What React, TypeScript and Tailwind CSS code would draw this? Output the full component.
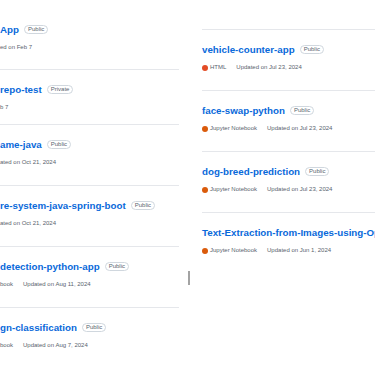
type Repo = {
  name: string
  badge: "Public" | "Private"
  language?: { name: string; color: string }
  updated: string
}

type Row = Repo & { pad: string }

const leftRows: Row[] = [
  { name: "App", badge: "Public", updated: "ed on Feb 7", pad: "pt-[22px] pb-[17px]" },
  { name: "repo-test", badge: "Private", updated: "b 7", pad: "pt-[12px] pb-[12px]" },
  { name: "ame-java", badge: "Public", updated: "ated on Oct 21, 2024", pad: "pt-[12px] pb-[18px]" },
  { name: "re-system-java-spring-boot", badge: "Public", updated: "ated on Oct 21, 2024", pad: "pt-[12px] pb-[18px]" },
  {
    name: "detection-python-app",
    badge: "Public",
    language: { name: "book", color: "" },
    updated: "Updated on Aug 11, 2024",
    pad: "pt-[12px] pb-[18px]",
  },
  {
    name: "gn-classification",
    badge: "Public",
    language: { name: "book", color: "" },
    updated: "Updated on Aug 7, 2024",
    pad: "pt-[12px] pb-[18px]",
  },
]

const rightRows: Repo[] = [
  {
    name: "vehicle-counter-app",
    badge: "Public",
    language: { name: "HTML", color: "bg-[#e34c26]" },
    updated: "Updated on Jul 23, 2024",
  },
  {
    name: "face-swap-python",
    badge: "Public",
    language: { name: "Jupyter Notebook", color: "bg-[#da5b0b]" },
    updated: "Updated on Jul 23, 2024",
  },
  {
    name: "dog-breed-prediction",
    badge: "Public",
    language: { name: "Jupyter Notebook", color: "bg-[#da5b0b]" },
    updated: "Updated on Jul 23, 2024",
  },
  {
    name: "Text-Extraction-from-Images-using-OpenCV-and-Tesseract",
    badge: "Public",
    language: { name: "Jupyter Notebook", color: "bg-[#da5b0b]" },
    updated: "Updated on Jun 1, 2024",
  },
]

const RepoBody = ({ repo }: { repo: Repo }) => {
  const { name, badge, language, updated } = repo

  return (
    <>
      <div className="flex h-[15px] items-center gap-[5px] whitespace-nowrap">
        <a className="text-[9.75px] leading-[15px] font-semibold text-[#0969da]">{name}</a>
        <span className="shrink-0 rounded-full border border-[#d0d7de] px-[3px] text-[6px] leading-[7px] font-medium text-[#59636e]">
          {badge}
        </span>
      </div>
      <div className="mt-[6px] flex h-[9px] items-center gap-[10px] whitespace-nowrap text-[6px] leading-[9px] text-[#59636e]">
        {language && (
          <span className="flex items-center gap-[2px]">
            {language.color && <span className={`size-[6px] rounded-full ${language.color}`} />}
            <span>{language.name}</span>
          </span>
        )}
        <span>{updated}</span>
      </div>
    </>
  )
}

export default function App() {
  return (
    <div className="flex h-[366px] w-[375px] overflow-hidden bg-white font-['Liberation_Sans',Arial,sans-serif]">
      <ul className="w-[179px] shrink-0">
        {leftRows.map((row) => (
          <li key={row.name} className={`border-b border-[#e5e7eb] ${row.pad}`}>
            <RepoBody repo={row} />
          </li>
        ))}
      </ul>
      <div className="w-[23px] shrink-0 pt-[271px] pl-[9px]">
        <div className="h-[14px] w-[2px] bg-[#a3a3a3]" />
      </div>
      <ul className="w-[420px] shrink-0 pt-[29px]">
        {rightRows.map((row) => (
          <li key={row.name} className="border-t border-[#e5e7eb] pt-[12px] pb-[18px]">
            <RepoBody repo={row} />
          </li>
        ))}
      </ul>
    </div>
  )
}
